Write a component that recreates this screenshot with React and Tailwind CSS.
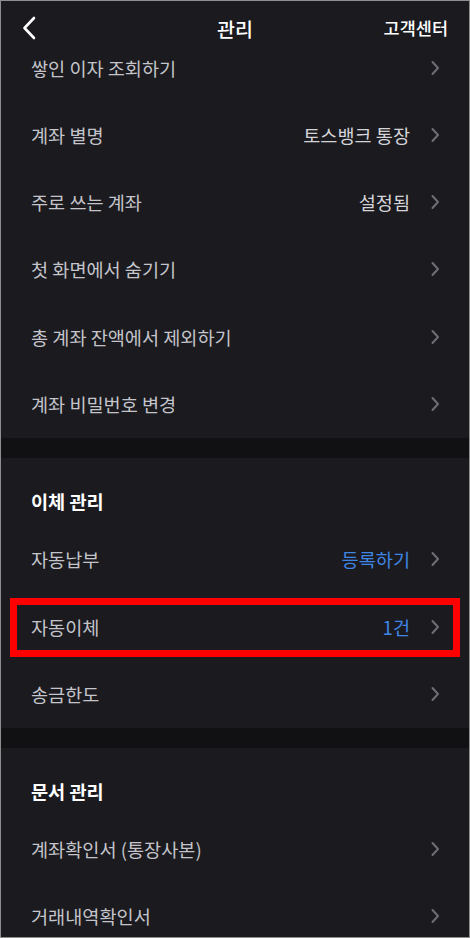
import React from "react";

const Chevron = () => (
  <svg width="10" height="16" viewBox="0 0 10 16" className="shrink-0">
    <path d="M2.5 2 L8 8 L2.5 14" fill="none" stroke="#6e6e76" strokeWidth="2" strokeLinecap="round" strokeLinejoin="round" />
  </svg>
);

function Row({ label, value, blue, first }) {
  return (
    <div className={first ? "flex h-[45px] items-start pl-[30px] pr-[29px]" : "flex h-[67.4px] items-center pl-[30px] pr-[29px]"}>
      <span className="flex-1 text-[18.6px] leading-[24px] text-[#c4c4ca]">{label}</span>
      {value && (
        <span className={blue ? "mr-[20px] text-[18.6px] leading-[24px] text-[#3f85e3]" : "mr-[20px] text-[18.6px] leading-[24px] text-[#d4d4d8]"}>{value}</span>
      )}
      <div className="flex h-[24px] items-center">
        <Chevron />
      </div>
    </div>
  );
}

function Header({ title }) {
  return (
    <div className="flex h-[67.5px] items-start pl-[30px] pt-[31px]">
      <span className="text-[18.6px] font-bold leading-[24px] text-white">{title}</span>
    </div>
  );
}

const Divider = () => <div className="h-[20px] bg-[#111114]" />;

export default function App() {
  return (
    <div
      className="w-[470px] h-[938px] overflow-hidden border border-[#8e8e8e] bg-[#1a1a1f]"
      style={{ fontFamily: '"Noto Sans CJK KR", "Noto Sans", sans-serif' }}
    >
      <div className="grid h-[55px] grid-cols-[1fr_auto_1fr] items-center px-[21px]">
        <svg width="14" height="24" viewBox="0 0 14 24" className="mb-[1px]">
          <path d="M12 2 L2.5 12 L12 22" fill="none" stroke="#ffffff" strokeWidth="2.6" strokeLinecap="round" strokeLinejoin="round" />
        </svg>
        <div className="text-center text-[19.5px] font-medium text-white">관리</div>
        <div className="text-right text-[17.5px] font-medium text-white">고객센터</div>
      </div>
      <Row first label="쌓인 이자 조회하기" />
      <Row label="계좌 별명" value="토스뱅크 통장" />
      <Row label="주로 쓰는 계좌" value="설정됨" />
      <Row label="첫 화면에서 숨기기" />
      <Row label="총 계좌 잔액에서 제외하기" />
      <Row label="계좌 비밀번호 변경" />
      <Divider />
      <Header title="이체 관리" />
      <Row label="자동납부" value="등록하기" blue />
      <div className="relative">
        <Row label="자동이체" value="1건" blue />
        <div className="absolute left-[9px] right-[9px] top-[5px] bottom-[3px] border-[7px] border-[#ff0000]" />
      </div>
      <Row label="송금한도" />
      <Divider />
      <Header title="문서 관리" />
      <Row label="계좌확인서 (통장사본)" />
      <Row label="거래내역확인서" />
    </div>
  );
}
